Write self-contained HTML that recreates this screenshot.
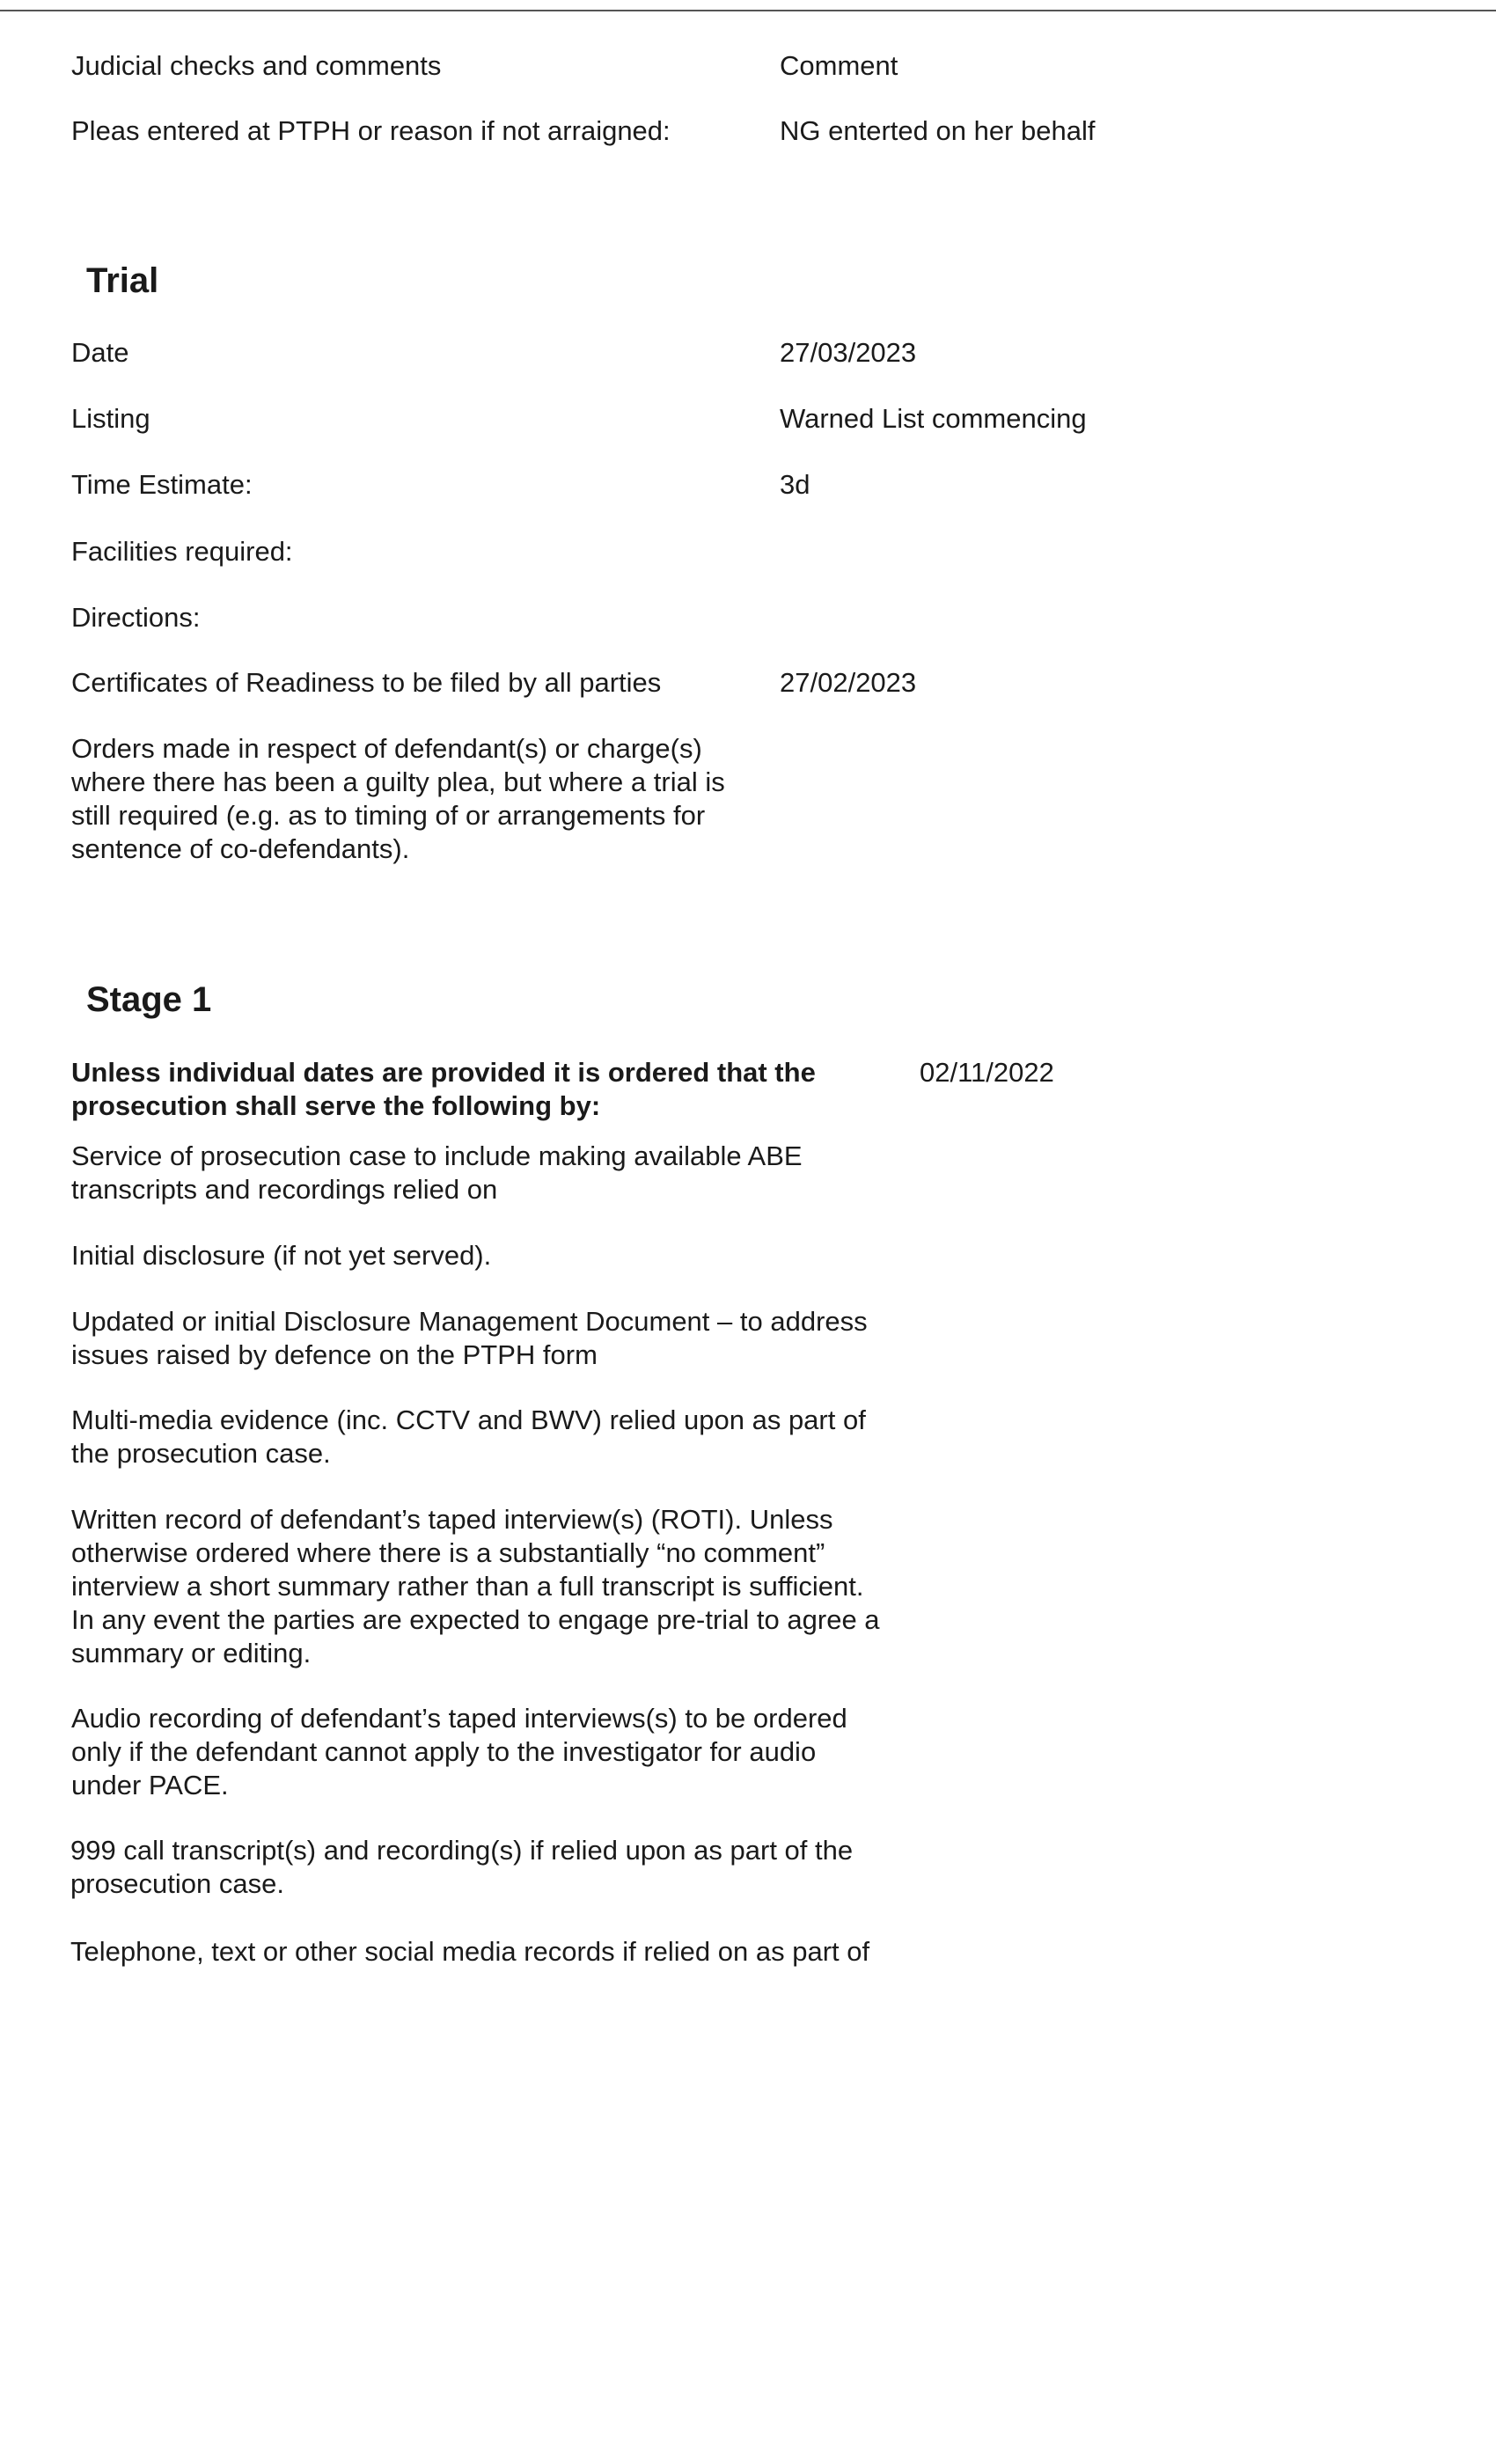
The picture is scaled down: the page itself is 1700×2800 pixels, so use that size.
<!DOCTYPE html>
<html><head><meta charset="utf-8"><style>
html,body{margin:0;padding:0;background:#fff;}
body{width:1700px;height:2800px;position:relative;overflow:hidden;font-family:"Liberation Sans Narrow","Liberation Sans",sans-serif;color:#1a1a1a;}
.t{position:absolute;font-size:31px;line-height:38px;white-space:nowrap;}
.h{position:absolute;font-size:40px;font-weight:bold;white-space:nowrap;}
.b{font-weight:bold;}
.line{position:absolute;left:0;top:11px;width:1700px;height:2px;background:#555;}
</style></head><body>
<div class="line"></div>
<div class="t" style="left:81px;top:56px">Judicial checks and comments</div>
<div class="t" style="left:886px;top:56px">Comment</div>
<div class="t" style="left:81px;top:130px">Pleas entered at PTPH or reason if not arraigned:</div>
<div class="t" style="left:886px;top:130px">NG enterted on her behalf</div>
<div class="h" style="left:98px;top:297px">Trial</div>
<div class="t" style="left:81px;top:382px">Date</div>
<div class="t" style="left:886px;top:382px">27/03/2023</div>
<div class="t" style="left:81px;top:457px">Listing</div>
<div class="t" style="left:886px;top:457px">Warned List commencing</div>
<div class="t" style="left:81px;top:532px">Time Estimate:</div>
<div class="t" style="left:886px;top:532px">3d</div>
<div class="t" style="left:81px;top:608px">Facilities required:</div>
<div class="t" style="left:81px;top:683px">Directions:</div>
<div class="t" style="left:81px;top:757px">Certificates of Readiness to be filed by all parties</div>
<div class="t" style="left:886px;top:757px">27/02/2023</div>
<div class="t" style="left:81px;top:832px">Orders made in respect of defendant(s) or charge(s)<br>where there has been a guilty plea, but where a trial is<br>still required (e.g. as to timing of or arrangements for<br>sentence of co-defendants).</div>
<div class="h" style="left:98px;top:1114px">Stage 1</div>
<div class="t b" style="left:81px;top:1200px">Unless individual dates are provided it is ordered that the<br>prosecution shall serve the following by:</div>
<div class="t" style="left:1045px;top:1200px">02/11/2022</div>
<div class="t" style="left:81px;top:1295px">Service of prosecution case to include making available ABE<br>transcripts and recordings relied on</div>
<div class="t" style="left:81px;top:1408px">Initial disclosure (if not yet served).</div>
<div class="t" style="left:81px;top:1483px">Updated or initial Disclosure Management Document – to address<br>issues raised by defence on the PTPH form</div>
<div class="t" style="left:81px;top:1595px">Multi-media evidence (inc. CCTV and BWV) relied upon as part of<br>the prosecution case.</div>
<div class="t" style="left:81px;top:1708px">Written record of defendant’s taped interview(s) (ROTI). Unless<br>otherwise ordered where there is a substantially “no comment”<br>interview a short summary rather than a full transcript is sufficient.<br>In any event the parties are expected to engage pre-trial to agree a<br>summary or editing.</div>
<div class="t" style="left:81px;top:1934px">Audio recording of defendant’s taped interviews(s) to be ordered<br>only if the defendant cannot apply to the investigator for audio<br>under PACE.</div>
<div class="t" style="left:80px;top:2084px">999 call transcript(s) and recording(s) if relied upon as part of the<br>prosecution case.</div>
<div class="t" style="left:80px;top:2199px">Telephone, text or other social media records if relied on as part of</div>
</body></html>
